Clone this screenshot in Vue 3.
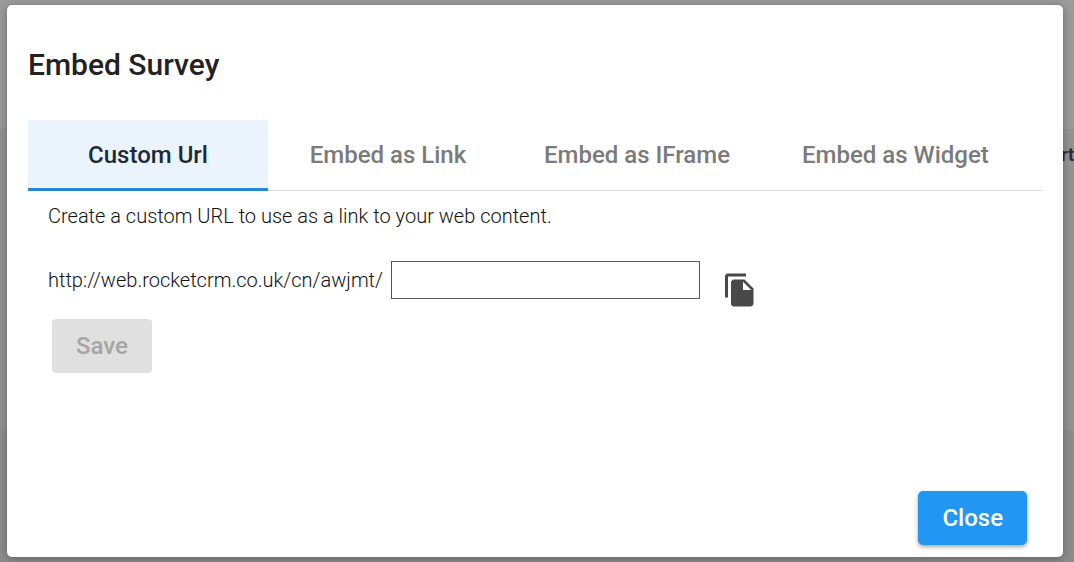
<script setup>
import { ref } from 'vue'

const tabs = ['Custom Url', 'Embed as Link', 'Embed as IFrame', 'Embed as Widget']
const active = ref(0)
const slug = ref('')
</script>

<template>
  <div class="backdrop">
    <span class="behind">rt</span>
    <section class="dialog" role="dialog" aria-modal="true" aria-labelledby="dialog-title">
      <h1 id="dialog-title">Embed Survey</h1>
      <div class="tabs" role="tablist">
        <button
          v-for="(tab, i) in tabs"
          :key="tab"
          type="button"
          role="tab"
          :aria-selected="active === i"
          :class="['tab', { active: active === i }]"
          @click="active = i"
        >{{ tab }}</button>
      </div>
      <div class="panel" role="tabpanel">
        <p>Create a custom URL to use as a link to your web content.</p>
        <div class="url-row">
          <label for="slug">http://web.rocketcrm.co.uk/cn/awjmt/</label>
          <input id="slug" v-model="slug" type="text" />
          <button class="copy" type="button" aria-label="Copy link">
            <svg viewBox="0 0 24 24" aria-hidden="true">
              <path d="M16 1H4c-1.100 0-2 .9-2 2v14h2V3h12V1zm-1 4l6 6v10c0 1.100-.9 2-2 2H7.990C6.890 23 6 22.100 6 21l.01-14c0-1.100.89-2 1.990-2h7zm-1 7h5.500L14 6.500V12z" />
            </svg>
          </button>
        </div>
        <button class="save" type="button" disabled>Save</button>
      </div>
      <footer>
        <button class="close" type="button">Close</button>
      </footer>
    </section>
  </div>
</template>

<style>
body {
  margin: 0;
}
</style>

<style scoped>
.backdrop {
  position: relative;
  display: flex;
  box-sizing: border-box;
  min-height: 100vh;
  padding: 5px 11px 5px 7px;
  background: linear-gradient(#9a9a9a 129px, #8f8f8f 129px, #929292 130px, #929292 430px, #8c8c8c 430px);
  font-family: Roboto, "Liberation Sans", sans-serif;
  overflow: hidden;
}

.behind {
  position: absolute;
  top: 144px;
  right: 0;
  font-size: 18px;
  line-height: 22px;
  font-weight: 700;
  color: #2c2c34;
}

.dialog {
  position: relative;
  flex: 1;
  display: flex;
  flex-direction: column;
  box-sizing: border-box;
  min-width: 0;
  padding: 40px 20px 12px 21px;
  border-radius: 5px;
  background: #fff;
  box-shadow: 0 2px 8px rgba(0, 0, 0, 0.3);
}

h1 {
  margin: 0 0 35px;
  font-size: 30px;
  line-height: 40px;
  font-weight: 500;
  color: #222;
}

button {
  border: 0;
  font-family: inherit;
  font-weight: 500;
  font-size: 24px;
  cursor: pointer;
}

.tabs {
  display: flex;
  border-bottom: 1px solid #dcdcdc;
}

.tab {
  box-sizing: border-box;
  min-width: 240px;
  height: 71px;
  margin-bottom: -1px;
  padding: 2px 36px 0;
  border-bottom: 3px solid transparent;
  background: none;
  color: #7b7b7b;
  white-space: nowrap;
}

.tab.active {
  border-bottom-color: #2388d1;
  background: #ebf4fd;
  color: #1f2a35;
}

.panel {
  flex: 1;
  padding: 11px 20px 0;
  font-size: 20px;
  line-height: 28px;
  font-weight: 300;
  color: #111;
}

.panel p {
  margin: 0 0 31px;
}

.url-row {
  display: flex;
  align-items: flex-start;
}

.url-row label {
  padding-top: 5px;
}

.url-row input {
  box-sizing: border-box;
  width: 309px;
  height: 38px;
  margin-left: 8px;
  padding: 0 8px;
  border: 1px solid #555;
  background: #fff;
  font: inherit;
}

.copy {
  margin: 11px 0 0 22px;
  padding: 0;
  background: none;
}

.copy svg {
  display: block;
  width: 36px;
  height: 36px;
  fill: #484848;
}

.save {
  display: block;
  height: 54px;
  margin: 11px 4px 0;
  padding: 0 24px;
  border-radius: 4px;
  background: #e0e0e0;
  color: #a6a6a6;
  cursor: default;
}

footer {
  display: flex;
  justify-content: flex-end;
  padding-right: 16px;
}

.close {
  height: 54px;
  padding: 0 24px;
  border-radius: 5px;
  background: #2196f3;
  color: #fff;
  box-shadow: 0 2px 4px rgba(0, 0, 0, 0.35);
}
</style>
